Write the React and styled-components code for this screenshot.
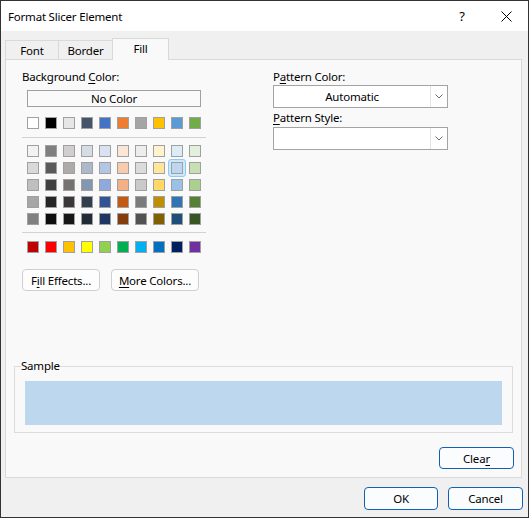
import React from 'react';
import styled, { createGlobalStyle } from 'styled-components';

const Global = createGlobalStyle`
  html, body { margin: 0; padding: 0; background: #fff; }
  body {
    font-family: "Noto Sans", "Open Sans", sans-serif;
    font-size: 11.5px;
    letter-spacing: -0.2px;
    color: #000;
  }
  u { text-decoration-thickness: 1px; text-underline-offset: 2px; }
`;

const Dialog = styled.div`
  width: 529px;
  height: 518px;
  box-sizing: border-box;
  border: 1px solid #333;
  background: #f0f0f0;
  display: flex;
  flex-direction: column;
`;

const TitleBar = styled.div`
  height: 30px;
  flex-shrink: 0;
  background: #fff;
  display: flex;
  align-items: center;
  padding-left: 7px;
`;

const Title = styled.div`
  flex: 1;
  font-size: 11.5px;
`;

const TitleBtn = styled.div`
  width: 44px;
  height: 30px;
  display: flex;
  align-items: center;
  justify-content: center;
  font-size: 13px;
`;

const Body = styled.div`
  flex: 1;
  display: flex;
  flex-direction: column;
  padding: 7px 6px 0 4px;
`;

const TabBar = styled.div`
  display: flex;
  align-items: flex-end;
  height: 22px;
  margin-bottom: -1px;
  position: relative;
  z-index: 1;
`;

const Tab = styled.div`
  box-sizing: border-box;
  width: ${(p) => p.$w}px;
  height: ${(p) => (p.$active ? 22 : 20)}px;
  margin-left: ${(p) => (p.$first ? 0 : -1)}px;
  border: 1px solid #d9d9d9;
  border-bottom: ${(p) => (p.$active ? 'none' : '1px solid #d9d9d9')};
  background: ${(p) => (p.$active ? '#f9f9f9' : '#f0f0f0')};
  display: flex;
  align-items: center;
  justify-content: center;
  padding-bottom: ${(p) => (p.$active ? 3 : 0)}px;
  position: relative;
  z-index: ${(p) => (p.$active ? 2 : 1)};
`;

const Panel = styled.div`
  box-sizing: border-box;
  height: 419px;
  border: 1px solid #d9d9d9;
  background: #f9f9f9;
  padding: 9px 8px 8px;
  display: flex;
  flex-direction: column;
`;

const Top = styled.div`
  display: flex;
  gap: 67px;
  padding-left: 8px;
`;

const LeftCol = styled.div`
  width: 184px;
  display: flex;
  flex-direction: column;
`;

const RightCol = styled.div`
  width: 175px;
  display: flex;
  flex-direction: column;
`;

const Label = styled.div`
  line-height: 16px;
  height: 16px;
  margin-top: ${(p) => p.$mt || 0}px;
  white-space: nowrap;
`;

const NoColor = styled.div`
  box-sizing: border-box;
  margin: 5px 0 0 5px;
  width: 174px;
  height: 17px;
  border: 1px solid #a0a0a0;
  background: #fafafa;
  text-align: center;
  line-height: 15px;
`;

const SwatchGrid = styled.div`
  display: grid;
  grid-template-columns: repeat(10, 12px);
  column-gap: 6px;
  row-gap: 5px;
  margin-left: 5px;
  margin-top: ${(p) => p.$mt}px;
`;

const Swatch = styled.div`
  box-sizing: border-box;
  width: 12px;
  height: 12px;
  border: 1px solid #a0a0a0;
  background: ${(p) => p.$c};
  position: relative;
  ${(p) =>
    p.$sel &&
    `
    box-shadow: 0 0 0 2px #cde8fb;
    &::before {
      content: '';
      position: absolute;
      inset: -4px;
      border: 1px solid #8ccaf5;
      border-radius: 3px;
    }
  `}
`;

const Divider = styled.div`
  height: 1px;
  background: #d2d2d2;
  margin-top: ${(p) => p.$mt}px;
`;

const BtnRow = styled.div`
  display: flex;
  gap: 11px;
  margin-top: 16px;
`;

const GrayButton = styled.div`
  box-sizing: border-box;
  width: ${(p) => p.$w}px;
  height: 22px;
  border: 1px solid #cfcfcf;
  border-radius: 4px;
  background: #fdfdfd;
  display: flex;
  align-items: center;
  justify-content: center;
  white-space: nowrap;
`;

const Dropdown = styled.div`
  box-sizing: border-box;
  height: 23px;
  margin-top: ${(p) => p.$mt || 0}px;
  border: 1px solid #a3a3a3;
  background: #fff;
  display: flex;
`;

const DropText = styled.div`
  flex: 1;
  text-align: center;
  line-height: 21px;
`;

const DropArrow = styled.div`
  width: 16px;
  border-left: 1px solid #e3e3e3;
  display: flex;
  align-items: center;
  justify-content: center;
`;

const Spacer = styled.div`
  flex: 1;
`;

const Group = styled.fieldset`
  margin: 0;
  min-width: 0;
  padding: 7px 10px 7px 10px;
  border: 1px solid #dcdcdc;
`;

const Legend = styled.legend`
  padding: 0;
  margin-left: -4px;
  line-height: 16px;
  font-size: 11.5px;
`;

const SampleFill = styled.div`
  height: 44px;
  background: ${(p) => p.$c};
`;

const ClearRow = styled.div`
  display: flex;
  justify-content: flex-end;
  margin-top: 14px;
  margin-right: -1px;
`;

const BlueButton = styled.div`
  box-sizing: border-box;
  width: ${(p) => p.$w}px;
  height: ${(p) => p.$h || 22}px;
  border: 1px solid #1160b4;
  border-radius: 4px;
  background: #fbfcfe;
  display: flex;
  align-items: center;
  justify-content: center;
`;

const Footer = styled.div`
  display: flex;
  justify-content: flex-end;
  gap: 10px;
  padding: 9px 0 7px 0;
  margin-right: -1px;
`;

const themeRow = ['#FFFFFF', '#000000', '#E7E6E6', '#44546A', '#4472C4', '#ED7D31', '#A5A5A5', '#FFC000', '#5B9BD5', '#70AD47'];
const shades = [
  ['#F2F2F2', '#7F7F7F', '#D0CECE', '#D6DCE4', '#D9E2F3', '#FBE5D5', '#EDEDED', '#FFF2CC', '#DDEBF7', '#E2EFDA'],
  ['#D9D9D9', '#595959', '#AEAAAA', '#ADB9CA', '#B4C6E7', '#F8CBAD', '#DBDBDB', '#FFE699', '#BDD7EE', '#C6E0B4'],
  ['#BFBFBF', '#404040', '#757171', '#8497B0', '#8EA9DB', '#F4B084', '#C9C9C9', '#FFD966', '#9BC2E6', '#A9D08E'],
  ['#A6A6A6', '#262626', '#3A3838', '#333F4F', '#305496', '#C65911', '#7B7B7B', '#BF8F00', '#2F75B5', '#548235'],
  ['#808080', '#0D0D0D', '#161616', '#222B35', '#203764', '#833C0C', '#525252', '#806000', '#1F4E78', '#375623'],
];
const standard = ['#C00000', '#FF0000', '#FFC000', '#FFFF00', '#92D050', '#00B050', '#00B0F0', '#0070C0', '#002060', '#7030A0'];

const Chevron = () => (
  <svg width="8" height="5" viewBox="0 0 8 5">
    <path d="M0.5 0.5 L4 4 L7.5 0.5" fill="none" stroke="#6a6a6a" strokeWidth="1" />
  </svg>
);

const CloseIcon = () => (
  <svg width="11" height="11" viewBox="0 0 11 11">
    <path d="M0.5 0.5 L10.5 10.5 M10.5 0.5 L0.5 10.5" stroke="#000" strokeWidth="1" />
  </svg>
);

export default function App() {
  const selected = '#BDD7EE';
  return (
    <>
      <Global />
      <Dialog>
        <TitleBar>
          <Title>Format Slicer Element</Title>
          <TitleBtn>?</TitleBtn>
          <TitleBtn>
            <CloseIcon />
          </TitleBtn>
        </TitleBar>
        <Body>
          <TabBar>
            <Tab $w={54} $first>Font</Tab>
            <Tab $w={55}>Border</Tab>
            <Tab $w={57} $active>Fill</Tab>
          </TabBar>
          <Panel>
            <Top>
              <LeftCol>
                <Label>
                  Background <u>C</u>olor:
                </Label>
                <NoColor>No Color</NoColor>
                <SwatchGrid $mt={10}>
                  {themeRow.map((c) => (
                    <Swatch key={c} $c={c} />
                  ))}
                </SwatchGrid>
                <Divider $mt={8} />
                <SwatchGrid $mt={7}>
                  {shades.flatMap((row, r) =>
                    row.map((c, i) => <Swatch key={r + '-' + i} $c={c} $sel={c === selected} />)
                  )}
                </SwatchGrid>
                <Divider $mt={7} />
                <SwatchGrid $mt={8}>
                  {standard.map((c) => (
                    <Swatch key={c} $c={c} />
                  ))}
                </SwatchGrid>
                <BtnRow>
                  <GrayButton $w={78}>
                    F<u>i</u>ll Effects...
                  </GrayButton>
                  <GrayButton $w={88}>
                    <u>M</u>ore Colors...
                  </GrayButton>
                </BtnRow>
              </LeftCol>
              <RightCol>
                <Label>
                  P<u>a</u>ttern Color:
                </Label>
                <Dropdown>
                  <DropText>Automatic</DropText>
                  <DropArrow>
                    <Chevron />
                  </DropArrow>
                </Dropdown>
                <Label $mt={2}>
                  <u>P</u>attern Style:
                </Label>
                <Dropdown $mt={1}>
                  <DropText />
                  <DropArrow>
                    <Chevron />
                  </DropArrow>
                </Dropdown>
              </RightCol>
            </Top>
            <Spacer />
            <Group>
              <Legend>Sample</Legend>
              <SampleFill $c={selected} />
            </Group>
            <ClearRow>
              <BlueButton $w={75}>
                Clea<u>r</u>
              </BlueButton>
            </ClearRow>
          </Panel>
          <Footer>
            <BlueButton $w={74} $h={23}>OK</BlueButton>
            <BlueButton $w={75} $h={23}>Cancel</BlueButton>
          </Footer>
        </Body>
      </Dialog>
    </>
  );
}
